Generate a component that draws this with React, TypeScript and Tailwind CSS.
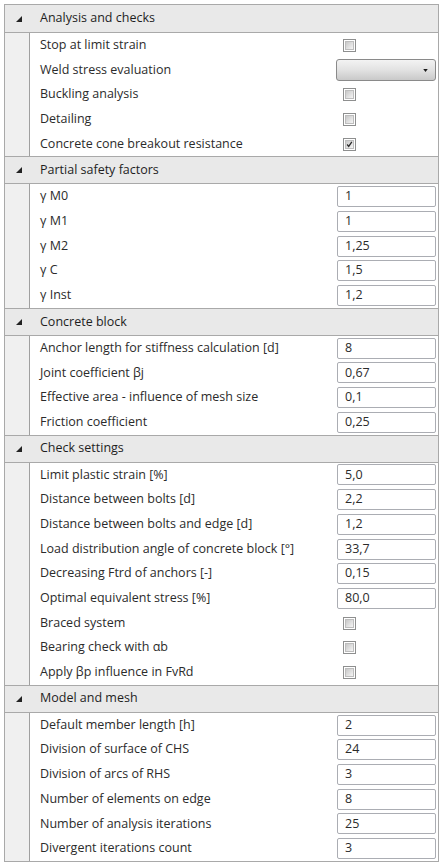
type Value =
  | { kind: "check"; checked: boolean }
  | { kind: "select" }
  | { kind: "text"; text: string };

type Row = { label: string; value: Value };
type Section = { title: string; rows: Row[] };

const cb = (checked = false): Value => ({ kind: "check", checked });
const tx = (text: string): Value => ({ kind: "text", text });

const sections: Section[] = [
  {
    title: "Analysis and checks",
    rows: [
      { label: "Stop at limit strain", value: cb() },
      { label: "Weld stress evaluation", value: { kind: "select" } },
      { label: "Buckling analysis", value: cb() },
      { label: "Detailing", value: cb() },
      { label: "Concrete cone breakout resistance", value: cb(true) },
    ],
  },
  {
    title: "Partial safety factors",
    rows: [
      { label: "γ M0", value: tx("1") },
      { label: "γ M1", value: tx("1") },
      { label: "γ M2", value: tx("1,25") },
      { label: "γ C", value: tx("1,5") },
      { label: "γ Inst", value: tx("1,2") },
    ],
  },
  {
    title: "Concrete block",
    rows: [
      { label: "Anchor length for stiffness calculation [d]", value: tx("8") },
      { label: "Joint coefficient βj", value: tx("0,67") },
      { label: "Effective area - influence of mesh size", value: tx("0,1") },
      { label: "Friction coefficient", value: tx("0,25") },
    ],
  },
  {
    title: "Check settings",
    rows: [
      { label: "Limit plastic strain [%]", value: tx("5,0") },
      { label: "Distance between bolts [d]", value: tx("2,2") },
      { label: "Distance between bolts and edge [d]", value: tx("1,2") },
      { label: "Load distribution angle of concrete block [°]", value: tx("33,7") },
      { label: "Decreasing Ftrd of anchors [-]", value: tx("0,15") },
      { label: "Optimal equivalent stress [%]", value: tx("80,0") },
      { label: "Braced system", value: cb() },
      { label: "Bearing check with αb", value: cb() },
      { label: "Apply βp influence in FvRd", value: cb() },
    ],
  },
  {
    title: "Model and mesh",
    rows: [
      { label: "Default member length [h]", value: tx("2") },
      { label: "Division of surface of CHS", value: tx("24") },
      { label: "Division of arcs of RHS", value: tx("3") },
      { label: "Number of elements on edge", value: tx("8") },
      { label: "Number of analysis iterations", value: tx("25") },
      { label: "Divergent iterations count", value: tx("3") },
    ],
  },
];

function CheckBox({ checked }: { checked: boolean }) {
  return (
    <div className="ml-[7px] w-[13px] h-[13px] border border-[#8e8f8f] bg-white p-[1px]">
      <div className="relative w-full h-full border border-[#bdbdbd] bg-gradient-to-br from-[#c8c8c8] to-[#f5f5f5]">
        {checked && (
          <svg viewBox="0 0 9 9" className="absolute inset-0 w-full h-full">
            <path d="M1.5 4.5 L3.5 7 L7.5 1.2" fill="none" stroke="#2a2a2a" strokeWidth="1.6" />
          </svg>
        )}
      </div>
    </div>
  );
}

function Select() {
  return (
    <div className="relative w-[100px] h-[22px] rounded-[3px] border border-[#8a8a8a] bg-gradient-to-b from-[#f3f3f3] via-[#e2e2e2] to-[#c9c9c9]">
      <svg viewBox="0 0 6 4" className="absolute right-[7px] top-[9px] w-[5px] h-[3px]">
        <polygon points="0,0 6,0 3,4" fill="#1a1a1a" />
      </svg>
    </div>
  );
}

function TextBox({ text }: { text: string }) {
  return (
    <div className="ml-[1px] w-[99px] h-[21px] rounded-[2px] border border-[#abadb3] bg-white pl-[7px] flex items-center text-[12.5px] text-[#2b2b2b]">
      {text}
    </div>
  );
}

function ValueCell({ value }: { value: Value }) {
  if (value.kind === "check") return <CheckBox checked={value.checked} />;
  if (value.kind === "select") return <Select />;
  return <TextBox text={value.text} />;
}

function Header({ title, first }: { title: string; first: boolean }) {
  return (
    <div
      className={
        "flex items-center h-[28px] bg-[#e9e9e9] border-b border-[#a9a9a9] " +
        (first ? "" : "border-t")
      }
    >
      <div className="w-[25px] flex justify-center">
        <svg viewBox="0 0 6 6" className="w-[6px] h-[6px] ml-[2px]">
          <polygon points="6,0 6,6 0,6" fill="#222" />
        </svg>
      </div>
      <span className="pl-[10px] text-[12.5px] text-[#1e1e1e]">{title}</span>
    </div>
  );
}

export default function App() {
  return (
    <div
      className="w-[443px] h-[867px] bg-white pt-[4px] pl-[4px]"
      style={{ fontFamily: '"Open Sans", "Noto Sans", sans-serif' }}
    >
      <div className="w-[435px] border border-[#a9a9a9] bg-white">
        {sections.map((s, i) => (
          <div key={s.title}>
            <Header title={s.title} first={i === 0} />
            {s.rows.map((r) => (
              <div key={r.label} className="flex items-center h-[24.7px]">
                <div className="w-[25px] h-full bg-[#f0f0f0] border-r border-[#a0a0a0]" />
                <div className="flex-1 pl-[10px] text-[12.5px] text-[#2b2b2b] whitespace-nowrap">
                  {r.label}
                </div>
                <div className="w-[102px] flex items-center">
                  <ValueCell value={r.value} />
                </div>
              </div>
            ))}
          </div>
        ))}
      </div>
    </div>
  );
}
